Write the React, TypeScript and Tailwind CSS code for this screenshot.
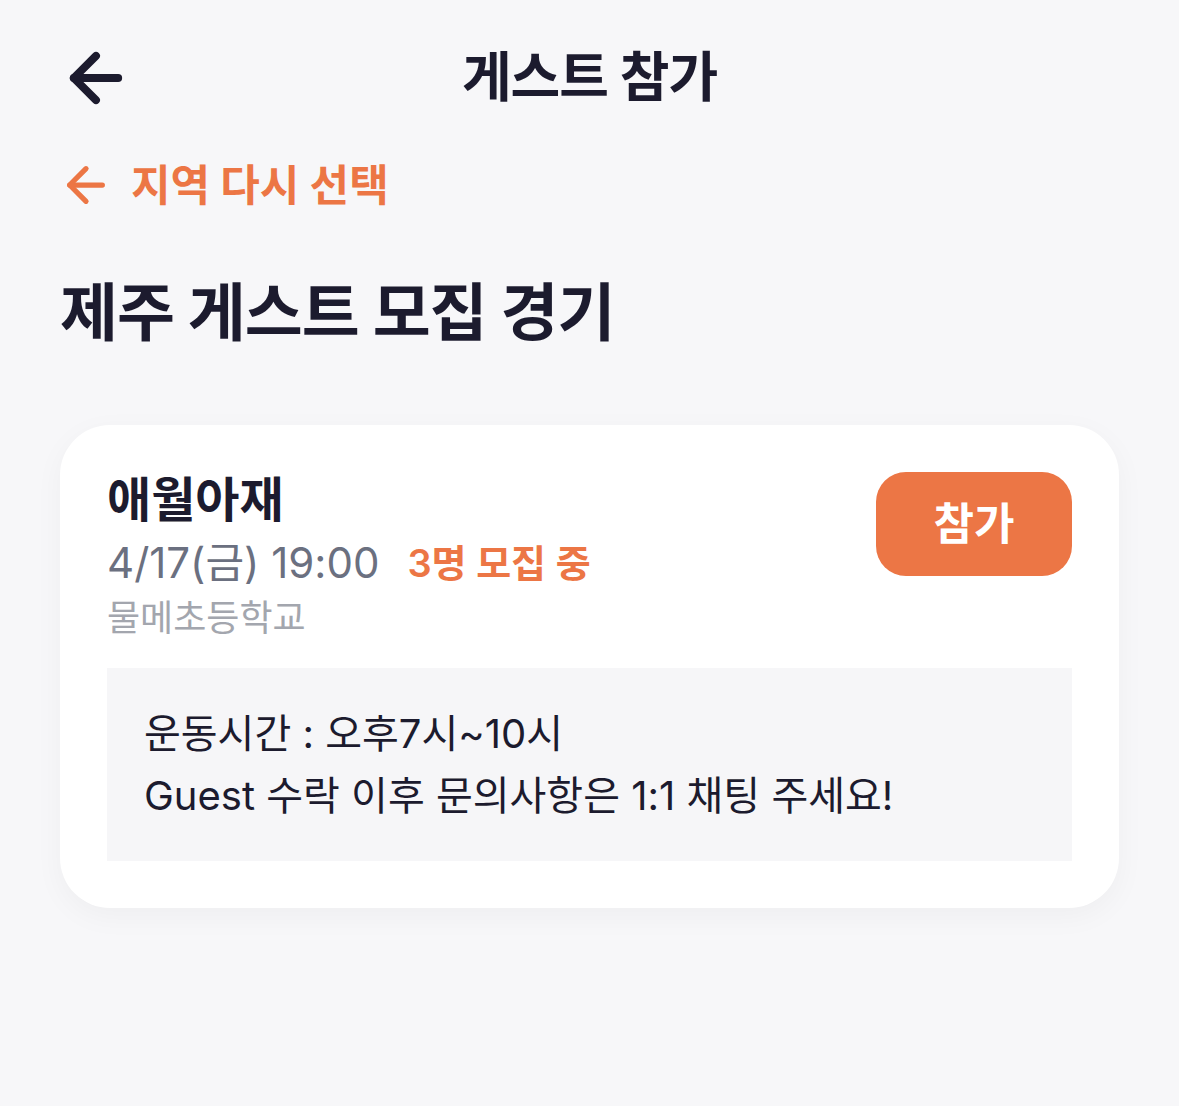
import React from "react";

const font = { fontFamily: "'Inter', 'Noto Sans CJK KR', sans-serif" };

const ArrowLeft: React.FC<{ size: number; stroke: number; className?: string }> = ({ size, stroke, className }) => (
  <svg
    width={size}
    height={size}
    viewBox="0 0 24 24"
    fill="none"
    stroke="currentColor"
    strokeWidth={stroke}
    strokeLinecap="round"
    strokeLinejoin="round"
    className={className}
  >
    <path d="M19 12H5" />
    <path d="M12 19l-7-7 7-7" />
  </svg>
);

const App: React.FC = () => {
  return (
    <div className="min-h-[1106px] w-full bg-[#f7f7f9] text-[#1c1b2e]" style={font}>
      <div className="px-[60px] pt-[40px]">
        <header className="grid grid-cols-[1fr_auto_1fr] items-center h-[76px]">
          <button className="justify-self-start -ml-[2px] text-[#1c1b2e]">
            <ArrowLeft size={76} stroke={2.5} />
          </button>
          <h1 className="text-[54px] font-bold leading-none tracking-[-1px]">게스트 참가</h1>
          <div />
        </header>

        <button className="mt-[41px] flex items-center gap-[17px] text-[#ec7645]">
          <ArrowLeft size={56} stroke={2.25} className="-ml-[2px]" />
          <span className="text-[43px] font-bold leading-none">지역 다시 선택</span>
        </button>

        <h2 className="mt-[68px] text-[63px] font-bold leading-none tracking-[-1px]">제주 게스트 모집 경기</h2>

        <section className="mt-[81px] bg-white rounded-[50px] shadow-[0_8px_30px_rgba(0,0,0,0.04)] px-[47px] pt-[46px] pb-[47px]">
          <div className="flex items-start justify-between">
            <div className="flex flex-col">
              <h3 className="text-[48px] font-bold leading-[58px]">애월아재</h3>
              <div className="mt-[9px] flex items-center gap-[28px] leading-[50px]">
                <span className="text-[42px] text-[#6b7080]">4/17(금) 19:00</span>
                <span className="text-[38px] font-semibold text-[#ec7645]">3명 모집 중</span>
              </div>
              <p className="mt-[8px] text-[36px] leading-[44px] text-[#a3a6ae]">물메초등학교</p>
            </div>
            <button className="mt-[1px] w-[196px] h-[104px] rounded-[30px] bg-[#ec7645] text-white text-[44px] font-bold">
              참가
            </button>
          </div>

          <div className="mt-[28px] bg-[#f6f6f8] px-[37px] pt-[35px] pb-[34px] text-[40px] leading-[62px] text-[#1c1b2e]">
            <p>운동시간 : 오후7시~10시</p>
            <p>Guest 수락 이후 문의사항은 1:1 채팅 주세요!</p>
          </div>
        </section>
      </div>
    </div>
  );
};

export default App;
